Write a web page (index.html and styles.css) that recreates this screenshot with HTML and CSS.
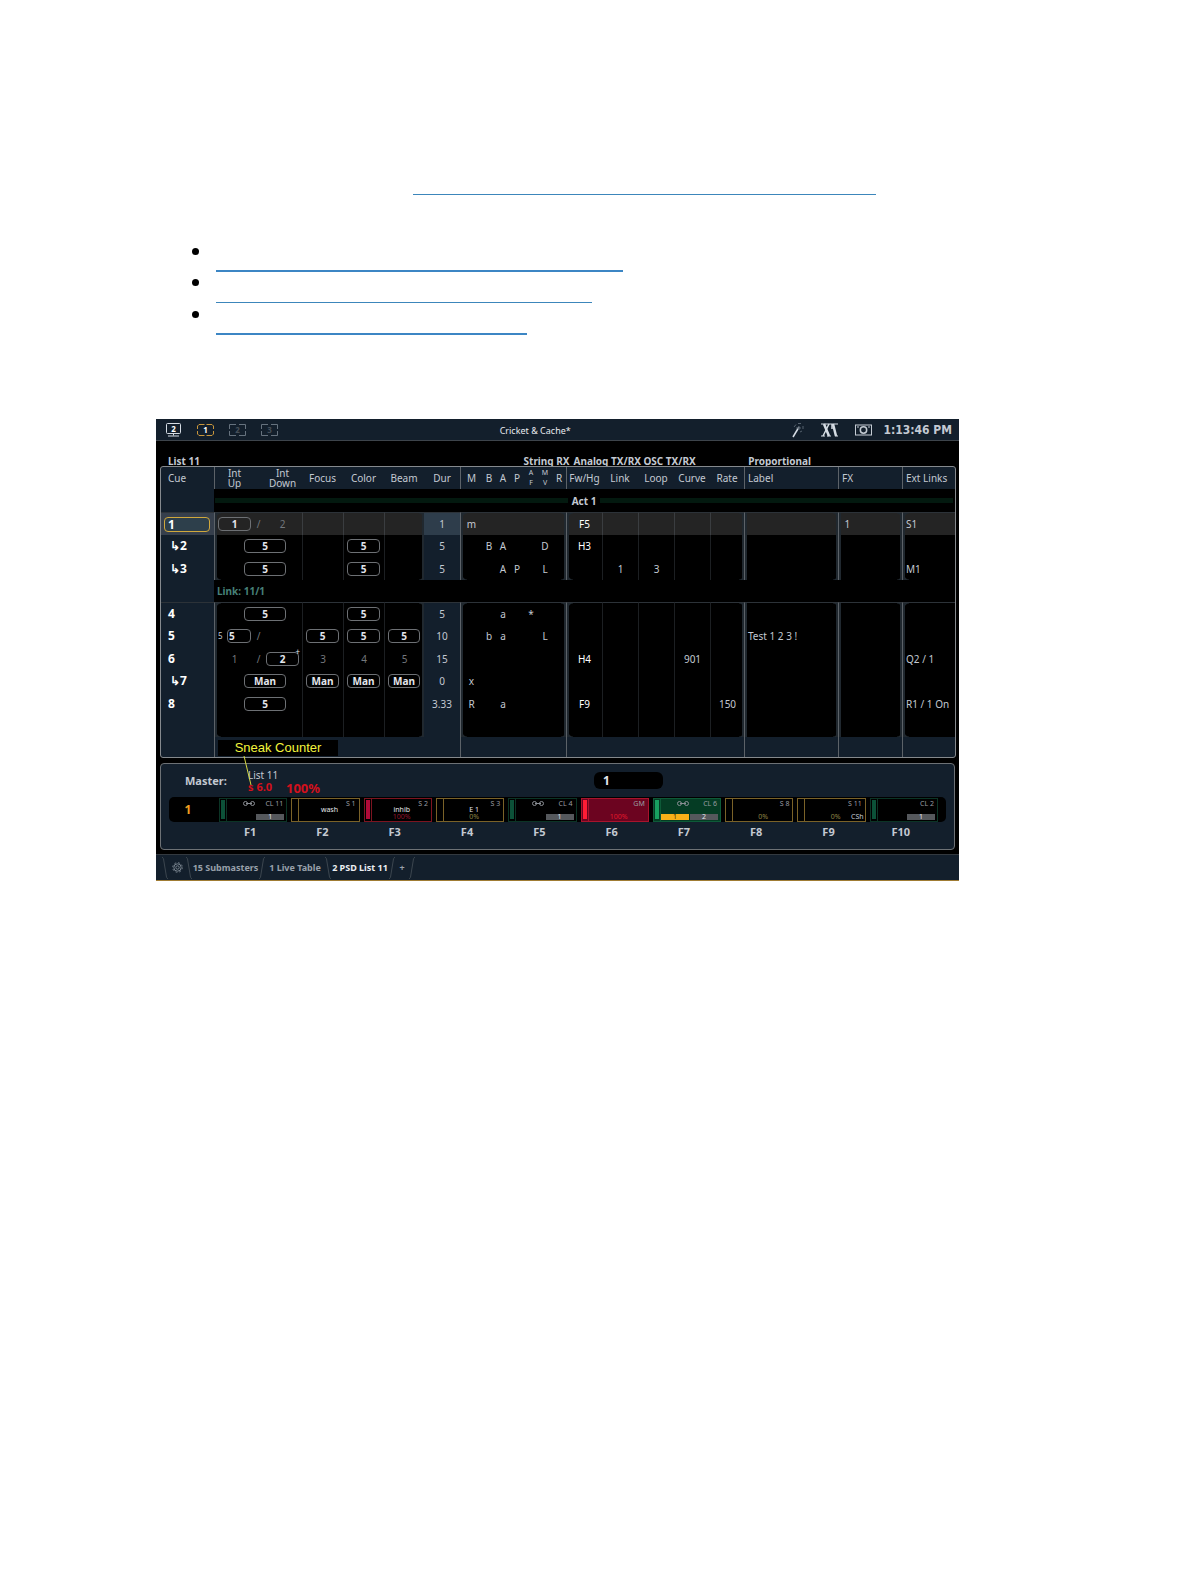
FILE: index.html
```
<!DOCTYPE html>
<html lang="en">
<head>
    <meta charset="utf-8">
    <title>Playback Status Display</title>
    <link rel="stylesheet" href="styles.css">
</head>
<body>
    <main class="page">
        <p class="intro"><a class="rule" href="#"></a></p>
        <ul class="links">
            <li><a class="rule thick w1" href="#"></a></li>
            <li><a class="rule w2" href="#"></a></li>
            <li><a class="rule thick w3" href="#"></a></li>
        </ul>

        <section class="console">
            <header class="topbar">
                <div class="monitors">
                    <svg width="17" height="14" viewBox="0 0 17 14" stroke="#d5dce4" fill="none"><rect x="1.5" y=".5" width="14" height="10" rx="1"/><path d="M8.500 10.500v2M3 13h11"/><text x="8.500" y="8.500">2</text></svg>
                    <svg class="on" width="17" height="14" viewBox="0 0 17 14" stroke="#c8963c" fill="none"><path d="M7.500 1.500H2L.5 3V6M.5 8v3L2 12.500h5.500M9.500 1.500H15L16.500 3V6M16.500 8v3L15 12.500H9.500"/><text x="8.500" y="10">1</text></svg>
                    <svg class="off" width="17" height="14" viewBox="0 0 17 14" stroke="#66727e" fill="none"><path d="M7 1.500H.5v4.500M.5 8v4.500H7M10 1.500h6.500v4.500M16.500 8v4.500H10"/><text x="8.500" y="10">2</text></svg>
                    <svg class="off" width="17" height="14" viewBox="0 0 17 14" stroke="#66727e" fill="none"><path d="M7 1.500H.5v4.500M.5 8v4.500H7M10 1.500h6.500v4.500M16.500 8v4.500H10"/><text x="8.500" y="10">3</text></svg>
                </div>
                <span class="show">Cricket &amp; Cache*</span>
                <div class="status">
                    <svg width="12" height="16" viewBox="0 0 12 16" fill="none"><path d="M1 15L7 5" stroke="#d5dce4" stroke-width="1.500"/><path d="M2 5L4 2.500M6 1.500h3M11 4v3M10 9L8 10M4 6h5M7 4v4" stroke="#56626e"/></svg>
                    <svg width="17" height="14" viewBox="0 0 17 14" fill="none" stroke="#d5dce4"><path d="M0 1h17M0 13h4M6 13h4M14 13h3"/><path d="M3 1l5 12M12 1l3 12" stroke-width="2.500"/><path d="M8 1L2 13M11 1v5" stroke-width="1.500"/></svg>
                    <svg width="17" height="12" viewBox="0 0 17 12" fill="none" stroke="#c5ccd4"><rect x=".5" y="1" width="16" height="10"/><circle cx="8.500" cy="6" r="3.200" stroke-width="1.500"/><path d="M2 3h2M13 3h2"/></svg>
                    <time class="clock">1:13:46 PM</time>
                </div>
            </header>

            <div class="listbar">
                <span>List 11</span>
                <span>String RX</span>
                <span>Analog TX/RX</span>
                <span>OSC TX/RX</span>
                <span>Proportional</span>
            </div>

            <div class="cues">
                <table>
                    <colgroup>
                        <col class="c-cue"><col class="c-int"><col class="c-time"><col class="c-time"><col class="c-beam"><col class="c-dur">
                        <col class="c-m"><col class="c-a"><col class="c-a"><col class="c-a"><col class="c-a"><col class="c-a"><col class="c-a">
                        <col class="c-fw"><col class="c-fw"><col class="c-fw"><col class="c-fw"><col class="c-rate">
                        <col class="c-label"><col class="c-fx"><col class="c-ext">
                    </colgroup>
                    <thead>
                        <tr>
                            <th class="left">Cue</th>
                            <th class="gs"><span class="pair"><span>Int<br>Up</span><span></span><span>Int<br>Down</span></span></th>
                            <th>Focus</th><th>Color</th><th>Beam</th><th>Dur</th>
                            <th class="gs">M</th><th>B</th><th>A</th><th>P</th><th class="tiny">A<br>F</th><th class="tiny">M<br>V</th><th>R</th>
                            <th class="gs">Fw/Hg</th><th>Link</th><th>Loop</th><th>Curve</th><th>Rate</th>
                            <th class="gs left">Label</th><th class="gs left">FX</th><th class="gs left">Ext Links</th>
                        </tr>
                    </thead>
                    <tbody>
                        <tr class="act"><td class="cue"></td><td colspan="20"><span class="scene">Act 1</span></td></tr>
                        <tr class="top current">
                            <td class="cue"><span class="selected">1</span></td>
                            <td class="gs"><span class="pair"><b class="pill">1</b><i>/</i><i>2</i></span></td>
                            <td class="in"></td><td class="in"></td><td class="in ge"></td><td class="dur">1</td>
                            <td class="gs">m</td><td></td><td></td><td></td><td></td><td></td><td class="ge"></td>
                            <td class="gs hot">F5</td><td class="in"></td><td class="in"></td><td class="in"></td><td class="in ge"></td>
                            <td class="gs ge left"></td><td class="gs ge left">&nbsp;1</td><td class="gs left">S1</td>
                        </tr>
                        <tr>
                            <td class="cue follow">↳2</td>
                            <td class="gs wide"><b class="pill">5</b></td>
                            <td class="in"></td><td class="in"><b class="pill">5</b></td><td class="in ge"></td><td class="dur">5</td>
                            <td class="gs"></td><td>B</td><td>A</td><td></td><td></td><td>D</td><td class="ge"></td>
                            <td class="gs hot">H3</td><td class="in"></td><td class="in"></td><td class="in"></td><td class="in ge"></td>
                            <td class="gs ge left"></td><td class="gs ge left"></td><td class="gs left"></td>
                        </tr>
                        <tr class="bottom">
                            <td class="cue follow">↳3</td>
                            <td class="gs wide"><b class="pill">5</b></td>
                            <td class="in"></td><td class="in"><b class="pill">5</b></td><td class="in ge"></td><td class="dur">5</td>
                            <td class="gs"></td><td></td><td>A</td><td>P</td><td></td><td>L</td><td class="ge"></td>
                            <td class="gs hot"></td><td class="in">1</td><td class="in">3</td><td class="in"></td><td class="in ge"></td>
                            <td class="gs ge left"></td><td class="gs ge left"></td><td class="gs left">M1</td>
                        </tr>
                        <tr class="jump"><td class="cue"></td><td colspan="20">Link: 11/1</td></tr>
                        <tr class="top">
                            <td class="cue">4</td>
                            <td class="gs wide"><b class="pill">5</b></td>
                            <td class="in"></td><td class="in"><b class="pill">5</b></td><td class="in ge"></td><td class="dur">5</td>
                            <td class="gs"></td><td></td><td>a</td><td></td><td>*</td><td></td><td class="ge"></td>
                            <td class="gs hot"></td><td class="in"></td><td class="in"></td><td class="in"></td><td class="in ge"></td>
                            <td class="gs ge left"></td><td class="gs ge left"></td><td class="gs left"></td>
                        </tr>
                        <tr>
                            <td class="cue">5</td>
                            <td class="gs"><span class="pair"><span class="delayed"><small>5</small><b class="pill">5</b></span><i>/</i><i></i></span></td>
                            <td class="in"><b class="pill">5</b></td><td class="in"><b class="pill">5</b></td><td class="in ge"><b class="pill">5</b></td><td class="dur">10</td>
                            <td class="gs"></td><td>b</td><td>a</td><td></td><td></td><td>L</td><td class="ge"></td>
                            <td class="gs hot"></td><td class="in"></td><td class="in"></td><td class="in"></td><td class="in ge"></td>
                            <td class="gs ge left">Test 1 2 3 !</td><td class="gs ge left"></td><td class="gs left"></td>
                        </tr>
                        <tr>
                            <td class="cue">6</td>
                            <td class="gs"><span class="pair"><i>1</i><i>/</i><b class="pill plus">2</b></span></td>
                            <td class="in"><i>3</i></td><td class="in"><i>4</i></td><td class="in ge"><i>5</i></td><td class="dur">15</td>
                            <td class="gs"></td><td></td><td></td><td></td><td></td><td></td><td class="ge"></td>
                            <td class="gs hot">H4</td><td class="in"></td><td class="in"></td><td class="in">901</td><td class="in ge"></td>
                            <td class="gs ge left"></td><td class="gs ge left"></td><td class="gs left">Q2 / 1</td>
                        </tr>
                        <tr>
                            <td class="cue follow">↳7</td>
                            <td class="gs wide"><b class="pill">Man</b></td>
                            <td class="in"><b class="pill">Man</b></td><td class="in"><b class="pill">Man</b></td><td class="in ge"><b class="pill">Man</b></td><td class="dur">0</td>
                            <td class="gs">x</td><td></td><td></td><td></td><td></td><td></td><td class="ge"></td>
                            <td class="gs hot"></td><td class="in"></td><td class="in"></td><td class="in"></td><td class="in ge"></td>
                            <td class="gs ge left"></td><td class="gs ge left"></td><td class="gs left"></td>
                        </tr>
                        <tr>
                            <td class="cue">8</td>
                            <td class="gs wide"><b class="pill">5</b></td>
                            <td class="in"></td><td class="in"></td><td class="in ge"></td><td class="dur">3.33</td>
                            <td class="gs">R</td><td></td><td>a</td><td></td><td></td><td></td><td class="ge"></td>
                            <td class="gs hot">F9</td><td class="in"></td><td class="in"></td><td class="in"></td><td class="in ge">150</td>
                            <td class="gs ge left"></td><td class="gs ge left"></td><td class="gs left">R1 / 1 On</td>
                        </tr>
                        <tr class="bottom">
                            <td class="cue"></td>
                            <td class="gs"></td>
                            <td class="in"></td><td class="in"></td><td class="in ge"></td><td class="dur"></td>
                            <td class="gs"></td><td></td><td></td><td></td><td></td><td></td><td class="ge"></td>
                            <td class="gs"></td><td class="in"></td><td class="in"></td><td class="in"></td><td class="in ge"></td>
                            <td class="gs ge"></td><td class="gs ge"></td><td class="gs"></td>
                        </tr>
                    </tbody>
                    <tfoot>
                        <tr>
                            <td></td><td class="gs" colspan="5"></td><td class="gs" colspan="7"></td><td class="gs" colspan="5"></td>
                            <td class="gs"></td><td class="gs"></td><td class="gs"></td>
                        </tr>
                    </tfoot>
                </table>
                <div class="callout">Sneak Counter
                    <svg width="10" height="30" viewBox="0 0 10 30"><path d="M1 0L8 29" stroke="#d8d840" fill="none"/></svg>
                </div>
            </div>

            <div class="faders">
                <div class="master">
                    <label for="page">Master:</label>
                    <span class="sneak">List 11<strong>s 6.0</strong></span>
                    <strong class="level">100%</strong>
                    <input id="page" type="text" value="1">
                </div>
                <div class="strip">
                    <span class="bank">1</span>
                    <div class="fader cl"><svg class="chain" viewBox="0 0 12 5"><rect x=".5" y=".5" width="4" height="4" rx="2"/><rect x="7.500" y=".5" width="4" height="4" rx="2"/><path d="M3 2.500h6"/></svg><span class="id">CL 11</span><span class="next">1</span></div>
                    <div class="fader sub"><span class="id">S 1</span><span class="name">wash</span></div>
                    <div class="fader inhib"><span class="id">S 2</span><span class="name">inhib</span><span class="pct">100%</span></div>
                    <div class="fader sub"><span class="id">S 3</span><span class="name">E 1</span><span class="pct">0%</span></div>
                    <div class="fader cl"><svg class="chain" viewBox="0 0 12 5"><rect x=".5" y=".5" width="4" height="4" rx="2"/><rect x="7.500" y=".5" width="4" height="4" rx="2"/><path d="M3 2.500h6"/></svg><span class="id">CL 4</span><span class="next">1</span></div>
                    <div class="fader gm"><span class="id">GM</span><span class="pct">100%</span></div>
                    <div class="fader cl live"><svg class="chain" viewBox="0 0 12 5"><rect x=".5" y=".5" width="4" height="4" rx="2"/><rect x="7.500" y=".5" width="4" height="4" rx="2"/><path d="M3 2.500h6"/></svg><span class="id">CL 6</span><span class="now">1</span><span class="next">2</span></div>
                    <div class="fader sub"><span class="id">S 8</span><span class="pct">0%</span></div>
                    <div class="fader sub"><span class="id">S 11</span><span class="pct">0%</span><span class="tag">CSh</span></div>
                    <div class="fader cl"><span class="id">CL 2</span><span class="next">1</span></div>
                </div>
                <div class="keys">
                    <span></span><span>F1</span><span>F2</span><span>F3</span><span>F4</span><span>F5</span><span>F6</span><span>F7</span><span>F8</span><span>F9</span><span>F10</span>
                </div>
            </div>

            <nav class="tabs">
                <svg class="slant" viewBox="0 0 6 24"><path d="M0 1q2 1 2 5l2 12q0 4 2 5"/></svg>
                <button class="gear" aria-label="Settings"><svg width="11" height="11" viewBox="0 0 11 11" fill="none" stroke="#77828d"><circle cx="5.500" cy="5.500" r="1.700"/><circle cx="5.500" cy="5.500" r="3.700"/><circle cx="5.500" cy="5.500" r="4.800" stroke-dasharray="1.800 1.970"/></svg></button>
                <svg class="slant" viewBox="0 0 6 24"><path d="M0 1q2 1 2 5l2 12q0 4 2 5"/></svg>
                <button class="t-sub">15 Submasters</button>
                <svg class="slant" viewBox="0 0 6 24"><path d="M6 1q-2 1-2 5l-2 12q0 4-2 5"/></svg>
                <button class="t-live">1 Live Table</button>
                <svg class="slant" viewBox="0 0 6 24"><path d="M0 1q2 1 2 5l2 12q0 4 2 5"/></svg>
                <button class="t-psd active">2 PSD List 11</button>
                <svg class="slant" viewBox="0 0 6 24"><path d="M6 1q-2 1-2 5l-2 12q0 4-2 5"/></svg>
                <button class="t-add">+</button>
                <svg class="slant" viewBox="0 0 6 24"><path d="M6 1q-2 1-2 5l-2 12q0 4-2 5"/></svg>
            </nav>
        </section>
    </main>
</body>
</html>
```
FILE: styles.css
```
:root {
    --navy: #131f2c;
    --line: #5c6268;
    --gutter: #20282f;
    --text: #c3c9d2;
}

* { box-sizing: border-box; }
body { margin: 0; background: #fff; color: #000; font-family: "Noto Sans", sans-serif; }
.page { padding: 180px 229px 40px 156px; }

/* intro links */
.rule { display: block; height: 12px; border-bottom: 1px solid #3c86bb; }
.thick { border-bottom: 2px solid #3c86c4; }
.intro { margin: 0; padding: 3px 83px 0 257px; }
.links { list-style: none; margin: 53px 0 0; padding: 0 0 0 36px; }
.links li { display: flex; align-items: flex-end; gap: 17px; height: 24px; margin-bottom: 7px; }
.links li::before { content: ""; align-self: flex-start; width: 7px; height: 7px; border-radius: 50%; background: #000; }
.links li:last-child { margin-top: 8px; }
.w1 { width: 53%; }
.w2 { width: 49%; }
.w3 { width: 40.5%; }

.console { margin-top: 84px; background: #000; color: var(--text); font-size: 10px; line-height: 12px; }

.topbar { display: flex; align-items: center; height: 22px; padding: 0 7px 0 9px; background: var(--navy); border-bottom: 1px solid #3d444b; }
.monitors { display: flex; gap: 15px; }
.monitors text { fill: #fff; stroke: none; font-size: 8px; font-weight: bold; text-anchor: middle; }
.monitors .off text { fill: #46505a; }
.show { margin: 2px auto 0; color: #e8eaee; font-size: 9px; }
.status { display: flex; align-items: center; gap: 17px; }
.clock { margin-left: -6px; font-size: 12px; font-weight: bold; font-family: "DejaVu Sans Condensed", "DejaVu Sans", sans-serif; }

.listbar { display: grid; grid-template-columns: 356fr 50fr 70fr 105fr 208fr; height: 25px; padding: 14px 3px 0 12px; font-weight: bold; white-space: nowrap; }

/* cue list */
.cues { position: relative; margin: 0 3px 0 4px; border: 1px solid #85898d; border-radius: 3px; background: var(--navy); }
table { width: 100%; table-layout: fixed; border-collapse: separate; border-spacing: 0; }
.c-cue { width: 53px; }
.c-int { width: 88px; }
.c-time { width: 41px; }
.c-beam { width: 40px; }
.c-dur { width: 36px; }
.c-m { width: 22px; }
.c-a { width: 14px; }
.c-fw { width: 36px; }
.c-rate { width: 34px; }
.c-label { width: 94px; }
.c-fx { width: 64px; }
.c-ext { width: 53px; }
th, td { padding: 0; height: 22px; text-align: center; font-weight: normal; white-space: nowrap; overflow: hidden; }
th { line-height: 10px; }
.tiny { font-size: 7px; }
th.gs, tfoot .gs { border-left: 1px solid var(--line); }
tbody tr:nth-child(even) td, .act td { height: 23px; }
tbody td { --cell: #000; background: var(--cell); }
tbody td.cue { padding-left: 7px; background: var(--navy); color: #fff; text-align: left; font-size: 12px; font-weight: bold; }
tbody td.follow { padding-left: 9px; }
tbody td.dur { background: var(--navy); }
th.left { padding-left: 7px; text-align: left; }
td.left { padding-left: 3px; text-align: left; }
th.gs.left { padding-left: 3px; }
tbody .gs { border-left: 1px solid var(--line); box-shadow: inset 2px 0 var(--gutter); }
tbody .ge { box-shadow: inset -2px 0 var(--gutter); }
tbody .gs.ge { box-shadow: inset 2px 0 var(--gutter), inset -2px 0 var(--gutter); }
.in { border-left: 1px solid #1c1f22; }
.hot { color: #fff; }

/* rounded ends of the column groups */
.top td { border-top: 1px solid #2c3238; }
.top .gs { background: radial-gradient(circle at 100% 100%, transparent 4px, var(--gutter) 5px) 1px 0 / 5px 5px no-repeat, var(--cell); }
.top .ge { background: radial-gradient(circle at 0 100%, transparent 4px, var(--gutter) 5px) 100% 0 / 5px 5px no-repeat, var(--cell); }
.bottom .gs { background: radial-gradient(circle at 100% 0, transparent 4px, var(--gutter) 5px) 1px 100% / 5px 5px no-repeat, var(--cell); }
.bottom .ge { background: radial-gradient(circle at 0 0, transparent 4px, var(--gutter) 5px) 100% 100% / 5px 5px no-repeat, var(--cell); }

.current td { --cell: #242424; }
.current td.cue { padding: 0 4px 0 3px; background: #363f4c; }
.current td.dur { background: #2e3d4b; }
.current td.in { border-left-color: #3a3d40; }
.selected { display: block; height: 15px; padding-left: 3px; border: 1px solid #d0a83c; border-radius: 4px; background: #2d3f4b; line-height: 14px; }

.scene { display: flex; align-items: center; gap: 4px; padding: 0 2px 0 1px; font-weight: bold; }
.scene::before, .scene::after { content: ""; flex: 1; height: 5px; background: #03190f; }
.jump td { padding-left: 3px; color: #478078; text-align: left; font-weight: bold; }

.pair { display: grid; grid-template-columns: 33px 1fr 33px; align-items: center; padding: 0 3px; }
i { color: #73777c; font-style: normal; }
.pill { display: block; position: relative; height: 14px; margin: 0 4px 0 3px; border: 1px solid #6d7074; border-radius: 4px; color: #e4e6ec; line-height: 13px; }
.pair .pill { margin: 0; }
.wide .pill { width: 42px; margin-left: 29px; }
.delayed { display: flex; align-items: center; justify-content: space-between; }
.delayed small { font-size: 8px; }
.delayed .pill { width: 24px; padding-left: 1px; text-align: left; }
.plus::after { content: "+"; position: absolute; top: -8px; right: -2px; font-size: 8px; font-weight: normal; }

tfoot td { height: 20px; }
.callout { position: absolute; left: 57px; bottom: 1px; width: 120px; height: 16px; background: #000; color: #f4f43c; font: 13px/16px "Liberation Sans", sans-serif; text-align: center; }
.callout svg { position: absolute; left: 25px; top: 16px; z-index: 2; }

/* fader panel */
.faders { margin: 5px 4px 0; height: 87px; padding: 0 8px; border: 1px solid #6d7175; border-radius: 4px; background: var(--navy); }
.master { display: flex; align-items: center; height: 33px; padding: 0 283px 0 16px; }
.master label { width: 63px; font-size: 11px; font-weight: bold; }
.sneak { width: 38px; line-height: 11px; }
.sneak strong { display: block; color: #d3101c; font-size: 11px; }
.level { align-self: flex-end; color: #d3101c; font-size: 13px; line-height: 18px; }
#page { width: 69px; height: 17px; margin-left: auto; padding: 0 9px; border: 0; border-radius: 6px; background: #000; color: #e4e6ec; font: bold 12px "Noto Sans", sans-serif; }
.strip, .keys { display: grid; grid-template-columns: 46px repeat(10, 1fr); gap: 4px; }
.strip { height: 25px; padding: 1px 8px 1px 0; border-radius: 5px; background: #000; }
.keys { grid-template-columns: 43px repeat(10, 1fr); padding-right: 11px; margin-top: 4px; font-size: 11px; font-weight: bold; text-align: center; }
.bank { padding-right: 8px; color: #f0a020; font-size: 12px; font-weight: bold; line-height: 24px; text-align: center; }
.fader { --bar: #000; --edge: #7a6228; position: relative; border: 1px solid var(--edge); background: linear-gradient(var(--edge), var(--edge)) 6px 0 / 1px 100% no-repeat, linear-gradient(var(--bar), var(--bar)) 1px 1px / 4px 19px no-repeat; font-size: 7px; line-height: 8px; }
.cl { --bar: #0c5138; --edge: #0b3425; }
.inhib { --bar: #b00a38; --edge: #7c1420; }
.gm { --bar: #ff1c34; --edge: #a8142c; background-color: #6c0420; }
.live { --bar: #18a060; --edge: #0e5a38; background-color: #053c24; }
.id { position: absolute; top: 1px; right: 3px; color: #9a9da2; }
.chain { position: absolute; top: 2px; left: 23px; width: 12px; height: 5px; fill: none; stroke: #8a8e94; }
.name { position: absolute; top: 7px; left: 8px; right: 0; color: #e4e6ec; text-align: center; }
.pct { position: absolute; bottom: 0; left: 8px; right: 0; color: #8e8444; text-align: center; }
.inhib .pct { color: #94142c; }
.gm .pct { color: #e0182c; }
.tag { position: absolute; right: 1px; bottom: 0; }
.now, .next { position: absolute; bottom: 1px; right: 2px; width: 28px; height: 6px; background: #55585c; color: #e4e6ec; line-height: 6px; text-align: center; }
.now { right: 31px; background: #f8b018; color: #3c2c04; }

.tabs { display: flex; align-items: center; height: 27px; margin-top: 4px; padding-left: 6px; border-top: 1px solid #33393f; border-bottom: 1px solid #a07c34; background: var(--navy); }
.tabs button { padding: 0; border: 0; background: none; color: #98a0aa; font: bold 9px "Noto Sans", sans-serif; white-space: nowrap; }
.tabs .active { color: #eceef2; }
.slant { width: 6px; height: 24px; fill: none; stroke: #3c464f; }
.tabs .gear { display: flex; justify-content: center; width: 18px; }
.t-sub { width: 67px; }
.t-live { width: 60px; }
.t-psd { width: 58px; }
.t-add { width: 14px; }
```
